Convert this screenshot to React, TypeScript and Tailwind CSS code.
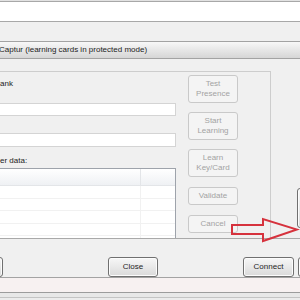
const btn =
  "shrink-0 flex items-center justify-center rounded-[3px] border border-[#707070] bg-linear-to-b from-[#f7f7f7] to-[#dadada] text-[8px] text-[#1e1e1e] shadow-[inset_0_0_0_1px_#fcfcfc]";
const off =
  "flex flex-col items-center justify-center rounded-[3px] border border-[#c9c9c9] bg-[#f4f4f4] text-[8px] leading-[10px] text-[#a3a3a3] text-center";

const App = () => {
  const rows = [0, 1, 2, 3];

  return (
    <div
      className="relative w-[300px] h-[300px] overflow-hidden bg-[#f0f0f0]"
      style={{ fontFamily: '"Liberation Sans", Arial, sans-serif' }}
    >
      {/* window chrome above the dialog */}
      <div className="h-px bg-[#e2e2e2]" />
      <div className="h-[21px] bg-white border-y border-[#a8a8a8]" />
      <div className="h-[19px] bg-[#f0f0f0]" />
      <div className="h-[18px] flex items-center border-y border-[#a3a3a3] bg-linear-to-b from-[#f8f8f8] to-[#d6d6d6]">
        <span className="-ml-px text-[8px] text-[#1c1c1c] whitespace-nowrap">
          Captur (learning cards in protected mode)
        </span>
      </div>

      {/* dialog body */}
      <div className="h-[180px] flex border-b border-[#a9a9a9]">
        <div className="w-[271px] shrink-0 pt-[12px] flex">
          <div className="flex-1 flex border-t border-r border-[#cdcdcd]">
            {/* left fields */}
            <div className="w-[176px] shrink-0 flex flex-col">
              <div className="mt-[7px] h-[10px] text-[8px] leading-[10px] text-[#222]">ank</div>
              <div className="mt-[14px] h-[13px] bg-white border border-l-0 border-[#d4d4d4]" />
              <div className="mt-[17px] h-[14px] bg-white border border-l-0 border-[#d4d4d4]" />
              <div className="mt-[9px] h-[10px] text-[8px] leading-[10px] text-[#222]">er data:</div>
              <div className="mt-[2px] flex-1 bg-white border-t border-r border-[#9ea3ab] flex flex-col">
                <div className="h-[17px] flex bg-linear-to-b from-white to-[#eff1f4] border-b border-[#e3e5e8]">
                  <div className="w-[141px] border-r border-[#e3e5e8]" />
                  <div className="flex-1" />
                </div>
                {rows.map((r) => (
                  <div key={r} className="h-[12.5px] flex border-b border-[#f1f1f1]">
                    <div className="w-[141px] border-r border-[#f1f1f1]" />
                  </div>
                ))}
                <div className="flex-1 flex">
                  <div className="w-[141px] border-r border-[#f1f1f1]" />
                </div>
              </div>
            </div>

            {/* action buttons, disabled */}
            <div className="ml-[12px] w-[50px] shrink-0 flex flex-col">
              <div className={`${off} mt-[3px] h-[28px]`}>
                <span>Test</span>
                <span>Presence</span>
              </div>
              <div className={`${off} mt-[9px] h-[28px]`}>
                <span>Start</span>
                <span>Learning</span>
              </div>
              <div className={`${off} mt-[9px] h-[28px]`}>
                <span>Learn</span>
                <span>Key/Card</span>
              </div>
              <div className={`${off} mt-[10px] h-[18px]`}>Validate</div>
              <div className={`${off} mt-[10px] h-[18px]`}>Cancel</div>
            </div>
          </div>
        </div>

        {/* strip on the right */}
        <div className="w-[29px] shrink-0 flex flex-col items-start">
          <div className={`${btn} mt-[129px] ml-[26px] w-[40px] h-[40px]`} />
        </div>
      </div>

      {/* bottom button row */}
      <div className="h-[39px] flex items-start pt-[18px] border-b border-[#a3a3a3]">
        <div className={`${btn} -ml-[47px] w-[50px] h-[20px]`} />
        <div className={`${btn} ml-[105px] w-[50px] h-[20px]`}>Close</div>
        <div className={`${btn} ml-[85px] w-[51px] h-[20px]`}>Connect</div>
        <div className={`${btn} ml-[4px] w-[40px] h-[20px]`} />
      </div>
      <div className="h-[14px] bg-[#f7f1f1]" />
      <div className="h-px bg-[#9c9c9c]" />
      <div className="h-[4px] bg-[#e8e8e8]" />
      <div className="h-px bg-[#c4c4c4]" />
      <div className="h-[4px] bg-[#ececec]" />

      {/* red arrow annotation */}
      <svg className="absolute left-0 top-0" width="300" height="300" viewBox="0 0 300 300">
        <polygon
          points="232,225 263,225 263,219 297,229.5 263,241 263,234 232,234"
          fill="none"
          stroke="#d6323d"
          strokeWidth="2"
          strokeLinejoin="miter"
        />
      </svg>
    </div>
  );
};

export default App;
